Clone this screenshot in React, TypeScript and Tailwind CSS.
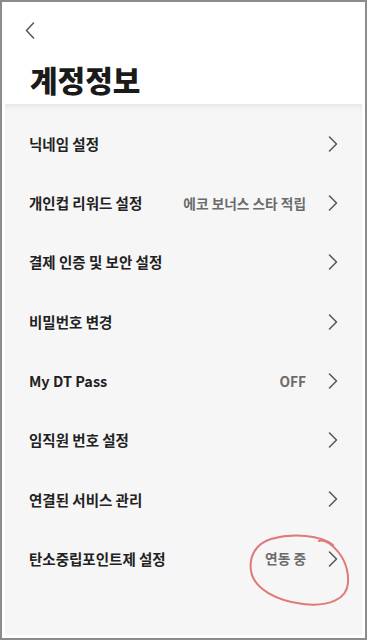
import React from "react";

type Row = {
  label: string;
  value?: string;
};

const rows: Row[] = [
  { label: "닉네임 설정" },
  { label: "개인컵 리워드 설정", value: "에코 보너스 스타 적립" },
  { label: "결제 인증 및 보안 설정" },
  { label: "비밀번호 변경" },
  { label: "My DT Pass", value: "OFF" },
  { label: "임직원 번호 설정" },
  { label: "연결된 서비스 관리" },
  { label: "탄소중립포인트제 설정", value: "연동 중" },
];

function Chevron() {
  return (
    <svg width="10" height="16" viewBox="0 0 10 16" fill="none" className="shrink-0">
      <path d="M1.5 1 L8.5 8 L1.5 15" stroke="#555" strokeWidth="1.5" strokeLinecap="round" strokeLinejoin="round" />
    </svg>
  );
}

export default function App() {
  return (
    <div
      className="relative w-[367px] h-[640px] border-2 border-[#8c8c8c] bg-white p-[3px] flex flex-col overflow-hidden"
      style={{ fontFamily: '"Noto Sans CJK KR", "Noto Sans", sans-serif' }}
    >
      <header className="h-[99px] flex flex-col shrink-0">
        <div className="h-[50px] flex items-center pl-[20px]">
          <svg width="10" height="17" viewBox="0 0 10 17" fill="none">
            <path d="M8.5 1 L1.5 8.5 L8.5 16" stroke="#555" strokeWidth="1.5" strokeLinecap="round" strokeLinejoin="round" />
          </svg>
        </div>
        <h1 className="mt-[6px] pl-[25px] text-[30px] leading-[36px] font-extrabold text-[#1a1a1a]">
          계정정보
        </h1>
      </header>

      <div className="flex-1 bg-[#f6f6f6] pt-[10px] shadow-[inset_0_5px_6px_-3px_rgba(0,0,0,0.08)]">
        {rows.map((row) => (
          <div key={row.label} className="h-[59.3px] flex items-center pl-[24px] pr-[24px]">
            <span className="flex-1 text-[14.5px] font-bold text-[#222]">{row.label}</span>
            {row.value && (
              <span className="text-[13.7px] font-bold text-[#6b6b6b] mr-[22px]">{row.value}</span>
            )}
            <Chevron />
          </div>
        ))}
      </div>

      <svg
        className="absolute left-[239px] top-[525px] pointer-events-none"
        width="115"
        height="85"
        viewBox="0 0 115 85"
        fill="none"
      >
        <path
          d="M92 18 C80 8, 52 6, 30 12 C14 17, 8 30, 10 44 C13 62, 36 74, 62 77 C88 80, 106 72, 107 56 C108 40, 101 26, 89 17 C84 14, 80 13, 78 14"
          stroke="#e06a6a"
          strokeWidth="2"
          strokeLinecap="round"
          strokeLinejoin="round"
          opacity="0.9"
        />
      </svg>
    </div>
  );
}
